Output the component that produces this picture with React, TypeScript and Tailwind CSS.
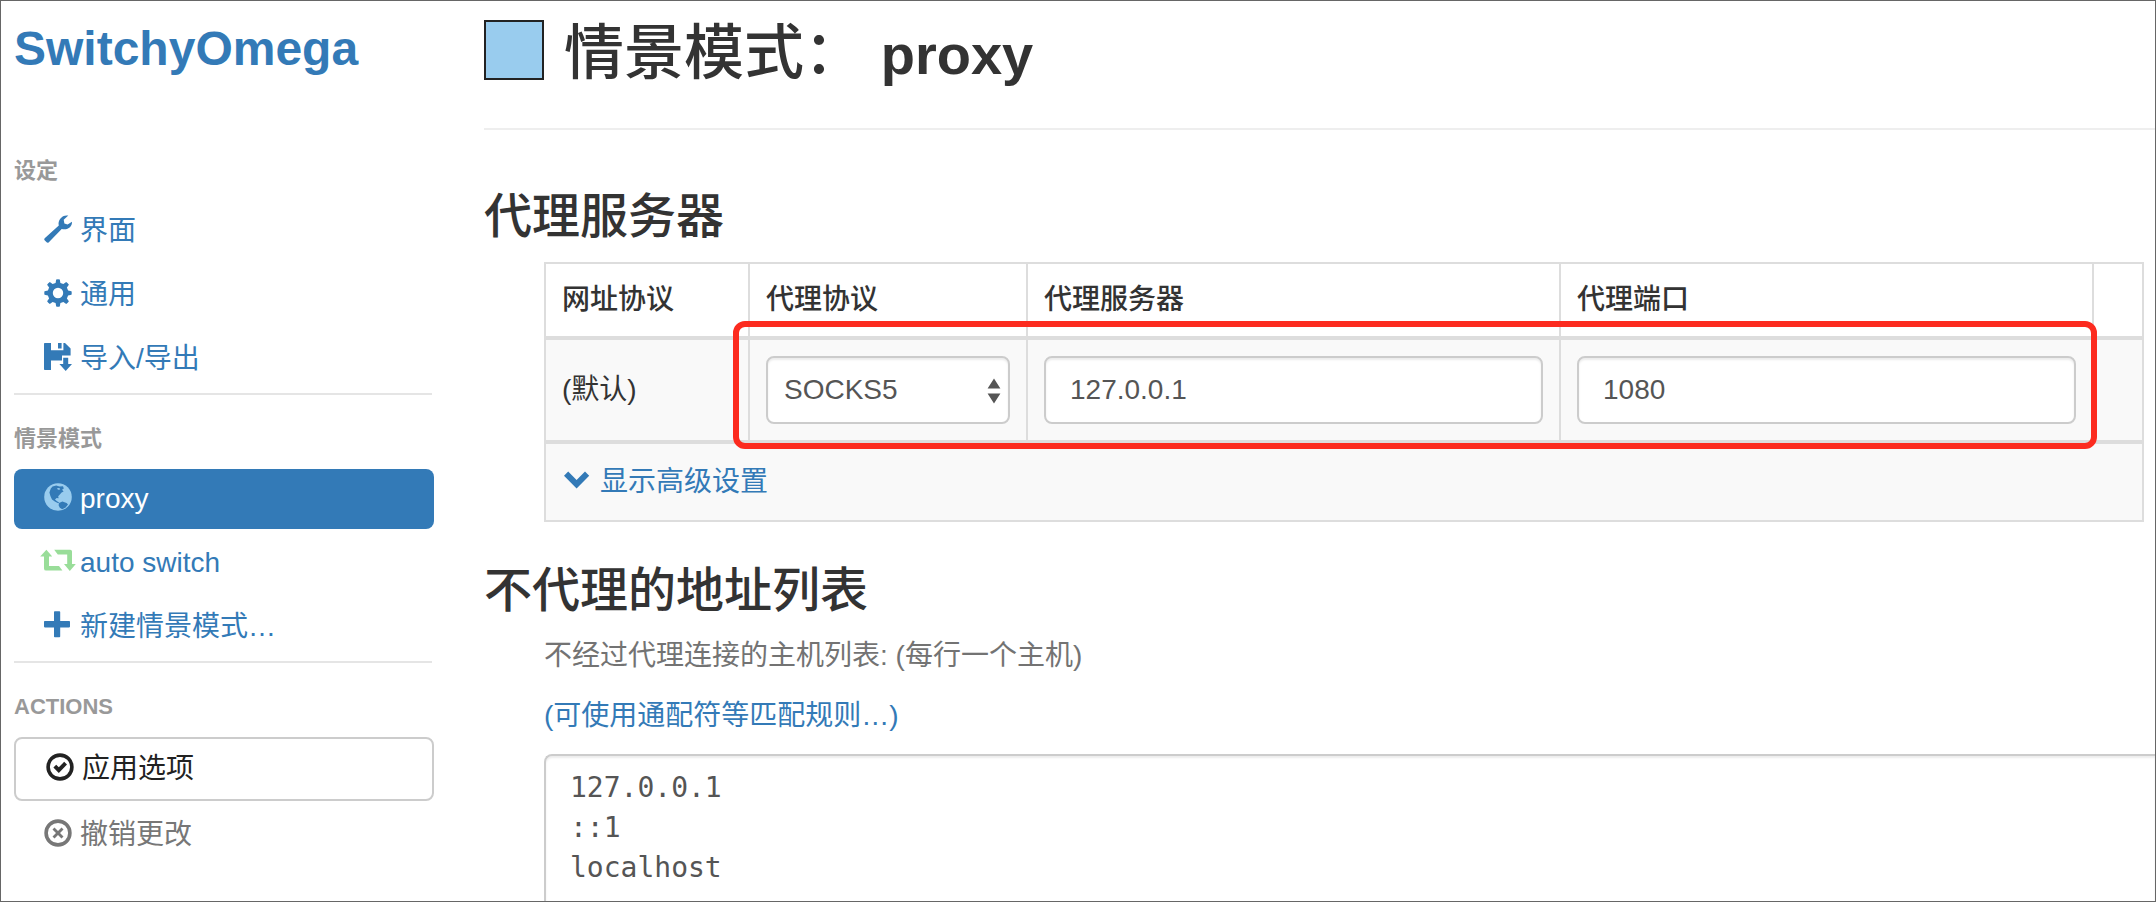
import { useState } from "react";
import type { ReactNode } from "react";
import clsx from "clsx";

function Icon({ children, className }: { children: ReactNode; className?: string }) {
  return (
    <svg viewBox="0 0 28 28" fill="currentColor" aria-hidden="true" className={clsx("mb-1 size-7 shrink-0 overflow-visible", className)}>
      {children}
    </svg>
  );
}

const WrenchIcon = () => (
  <Icon>
    <path d="M.7 23.2 14.8 10.6C13.4 5 18.3-.6 24.3.6L19.7 4.7 20.4 8.4 23.6 9.6 28 6.8C28.4 12 23.2 15.6 17.7 13.9L4.6 27.4Q3.6 28.2 2.6 27.3L.6 25.3Q-.3 24.2.7 23.2Z" />
  </Icon>
);

const CogIcon = () => (
  <Icon>
    <path
      fillRule="evenodd"
      d="M11.6 3.9 12.2.5Q14 0 15.8.5L16.4 3.9 19.4 5.1 22.2 3.1Q23.9 4.1 24.9 5.8L22.9 8.6 24.1 11.6 27.5 12.2Q28 14 27.5 15.8L24.1 16.4 22.9 19.4 24.9 22.2Q23.9 23.9 22.2 24.9L19.4 22.9 16.4 24.1 15.8 27.5Q14 28 12.2 27.5L11.6 24.1 8.6 22.9 5.8 24.9Q4.1 23.9 3.1 22.2L5.1 19.4 3.9 16.4.5 15.8Q0 14 .5 12.2L3.9 11.6 5.1 8.6 3.1 5.8Q4.1 4.1 5.8 3.1L8.6 5.1ZM14 8.8A5.2 5.2 0 1 0 14 19.2 5.2 5.2 0 1 0 14 8.8Z"
    />
  </Icon>
);

const FloppySaveIcon = () => (
  <Icon>
    <path d="M0 .8Q0 0 .8 0H7V7.2H19.4V0H21L26.6 5.6V12.6H18V17.5H7V27H.8Q0 27 0 26.2Z" />
    <path d="M14 0H17.6V5.4H14ZM19.2 14.8H24.2V21H28L21.7 28 15.4 21H19.2Z" />
  </Icon>
);

const GlobeIcon = () => (
  <Icon className="text-[#99ccee]">
    <circle cx="14" cy="14" r="13.8" />
    <path
      fill="#337ab7"
      d="M8.5 3.6 12.2 2.6 15.6 3.4 19 3.2 19.8 5.4 18 6.8 19.6 8.6 17.6 9.6 15.6 11.8 14.2 13.2 14.6 15.2 12.6 15 11 16.4 13 18.2 15.2 19.4 14.2 20.2 10.8 18.6 8 16.4 6.4 13 5.4 9.4 6.8 5.6ZM15 20 18.4 18.6 22.6 20 24 21.4 21.6 24.6 18.2 26.2 15.8 24.8 14.6 22.2Z"
    />
    <path d="M13 5.2 15.4 5 16.2 6.4 14 6.8Z" />
  </Icon>
);

const RetweetIcon = () => (
  <Icon className="text-[#99dd99]">
    <path d="M2.4 2.8 8.2 9.6H5V19H15L18.4 23.6H2.2Q0 23.6 0 21.4V9.6H-3.8ZM10.2 2.8H26.2Q28 2.8 28 4.6V17H31.8L25.8 24 20 17H23.2V7.4H13.8Z" />
  </Icon>
);

const PlusIcon = () => (
  <Icon>
    <path d="M10 1Q10 .2 10.8.2H15.4Q16.2.2 16.2 1V10H25.2Q26 10 26 10.8V15.6Q26 16.4 25.2 16.4H16.2V25.4Q16.2 26.2 15.4 26.2H10.8Q10 26.2 10 25.4V16.4H.8Q0 16.4 0 15.6V10.8Q0 10 .8 10H10Z" />
  </Icon>
);

const OkCircleIcon = () => (
  <Icon>
    <circle cx="14" cy="14" r="11.9" fill="none" stroke="currentColor" strokeWidth="3.6" />
    <path d="M7.4 14.6 10.2 11.8 12.8 14.2 18.2 8.8 21 11.6 12.8 20Z" />
  </Icon>
);

const RemoveCircleIcon = () => (
  <Icon>
    <circle cx="14" cy="14" r="11.9" fill="none" stroke="currentColor" strokeWidth="3.6" />
    <path d="M10.5 8.5 14 12 17.5 8.5 19.5 10.5 16 14 19.5 17.5 17.5 19.5 14 16 10.5 19.5 8.5 17.5 12 14 8.5 10.5Z" />
  </Icon>
);

const ChevronDownIcon = () => (
  <Icon>
    <path d="M2 9.8 6.2 5.6 14.6 14 23 5.6 27.2 9.8 14.6 22.4Z" />
  </Icon>
);

function NavHeader({ children }: { children: ReactNode }) {
  return <h2 className="pt-7 pb-[14px] text-[22px] leading-8 font-bold text-[#999999]">{children}</h2>;
}

function NavItem({ icon, active, muted, children }: { icon: ReactNode; active?: boolean; muted?: boolean; children: ReactNode }) {
  return (
    <li>
      <a
        href="#"
        className={clsx(
          "flex h-[60px] items-center gap-2 rounded-lg px-[30px]",
          active ? "bg-[#337ab7] text-white" : muted ? "text-[#777777]" : "text-[#337ab7]"
        )}
      >
        {icon}
        {children}
      </a>
    </li>
  );
}

function Divider() {
  return <hr className="mt-1 mr-[2px] border-t-2 border-[#e5e5e5]" />;
}

const control =
  "h-[68px] w-full rounded-lg border-2 border-[#cccccc] bg-white text-[#555555] shadow-[inset_0_2px_2px_rgba(0,0,0,0.075)] outline-none";

const sectionTitle = "text-[48px] leading-[54px] font-medium text-[#333333]";

const headCell = "border-x-2 border-[#dddddd] px-4 font-medium";

export default function App() {
  const [scheme, setScheme] = useState("SOCKS5");
  const [server, setServer] = useState("127.0.0.1");
  const [port, setPort] = useState("1080");
  const [bypass, setBypass] = useState("127.0.0.1\n::1\nlocalhost");

  return (
    <div className="flex h-screen overflow-hidden border border-[#666666] bg-white font-['Liberation_Sans','Noto_Sans_CJK_SC',sans-serif] text-[28px] leading-10 text-[#333333]">
      <aside className="w-[433px] shrink-0 pl-[13px]">
        <h1 className="pt-5 text-[48px] leading-[56px] font-bold">
          <a href="#" className="text-[#337ab7]">
            SwitchyOmega
          </a>
        </h1>
        <nav className="pt-[50px]">
          <NavHeader>设定</NavHeader>
          <ul className="flex flex-col gap-1">
            <NavItem icon={<WrenchIcon />}>界面</NavItem>
            <NavItem icon={<CogIcon />}>通用</NavItem>
            <NavItem icon={<FloppySaveIcon />}>导入/导出</NavItem>
          </ul>
          <Divider />
          <NavHeader>情景模式</NavHeader>
          <ul className="flex flex-col gap-1">
            <NavItem icon={<GlobeIcon />} active>
              proxy
            </NavItem>
            <NavItem icon={<RetweetIcon />}>auto switch</NavItem>
            <NavItem icon={<PlusIcon />}>新建情景模式…</NavItem>
          </ul>
          <Divider />
          <NavHeader>ACTIONS</NavHeader>
          <button
            type="button"
            className="mb-1 flex h-16 w-full items-center gap-2 rounded-lg border-2 border-[#cccccc] bg-white px-[30px] text-[#222222]"
          >
            <OkCircleIcon />
            应用选项
          </button>
          <ul>
            <NavItem icon={<RemoveCircleIcon />} muted>
              撤销更改
            </NavItem>
          </ul>
        </nav>
      </aside>

      <main className="flex min-w-0 flex-1 flex-col pl-[50px]">
        <header className="flex h-[129px] shrink-0 gap-5 border-b-2 border-[#eeeeee] pt-[19px]">
          <input type="button" aria-label="颜色" className="size-[60px] border-2 border-[#222222] bg-[#99ccee]" />
          <h2 className="text-[60px] leading-[68px] font-medium">
            情景模式： <span className="text-[56px] font-bold">proxy</span>
          </h2>
        </header>

        <section className="pt-[60px]">
          <h3 className={sectionTitle}>代理服务器</h3>
          <div className="relative mt-[18px] mr-[11px] ml-[60px]">
            <table className="w-full table-fixed border-collapse border-2 border-[#dddddd] text-left">
              <colgroup>
                <col className="w-[204px]" />
                <col className="w-[278px]" />
                <col />
                <col />
                <col className="w-[50px]" />
              </colgroup>
              <thead>
                <tr className="h-[75px] border-b-4 border-[#dddddd]">
                  <th className={headCell}>网址协议</th>
                  <th className={headCell}>代理协议</th>
                  <th className={headCell}>代理服务器</th>
                  <th className={headCell}>代理端口</th>
                  <td className="border-x-2 border-[#dddddd]" />
                </tr>
              </thead>
              <tbody className="bg-[#f9f9f9]">
                <tr className="h-[104px] border-b-4 border-[#dddddd]">
                  <td className="px-4">(默认)</td>
                  <td className="border-x-2 border-[#dddddd] px-4">
                    <div className="relative">
                      <select
                        aria-label="代理协议"
                        value={scheme}
                        onChange={(e) => setScheme(e.target.value)}
                        className={clsx(control, "block appearance-none px-4")}
                      >
                        <option>HTTP</option>
                        <option>HTTPS</option>
                        <option>SOCKS4</option>
                        <option>SOCKS5</option>
                      </select>
                      <svg
                        viewBox="0 0 14 26"
                        fill="#555555"
                        aria-hidden="true"
                        className="pointer-events-none absolute top-[22px] right-[9px] h-[26px] w-[14px]"
                      >
                        <path d="M7 .5 13.4 10.5H.6ZM7 25.5.6 15.5H13.4Z" />
                      </svg>
                    </div>
                  </td>
                  <td className="border-x-2 border-[#dddddd] px-4">
                    <input
                      type="text"
                      aria-label="代理服务器"
                      value={server}
                      onChange={(e) => setServer(e.target.value)}
                      className={clsx(control, "block px-6")}
                    />
                  </td>
                  <td className="border-x-2 border-[#dddddd] px-4">
                    <input
                      type="text"
                      aria-label="代理端口"
                      value={port}
                      onChange={(e) => setPort(e.target.value)}
                      className={clsx(control, "block px-6")}
                    />
                  </td>
                  <td />
                </tr>
                <tr className="h-[79px]">
                  <td colSpan={5} className="px-4">
                    <button type="button" className="flex items-center gap-[10px] text-[#337ab7]">
                      <ChevronDownIcon />
                      显示高级设置
                    </button>
                  </td>
                </tr>
              </tbody>
            </table>
            {/* highlight drawn over the editable cells */}
            <div className="pointer-events-none absolute top-[59px] right-[47px] left-[189px] h-32 rounded-xl border-6 border-[#fc2b1f]" />
          </div>
        </section>

        <section className="flex min-h-0 flex-1 flex-col pt-[42px]">
          <h3 className={sectionTitle}>不代理的地址列表</h3>
          <div className="flex min-h-0 flex-1 flex-col pl-[60px]">
            <p className="pt-[18px] text-[#737373]">不经过代理连接的主机列表: (每行一个主机)</p>
            <p className="pt-5 pb-[18px]">
              <a href="#" className="text-[#337ab7]">
                (可使用通配符等匹配规则…)
              </a>
            </p>
            <textarea
              aria-label="不代理的地址列表"
              value={bypass}
              onChange={(e) => setBypass(e.target.value)}
              className="w-full flex-1 resize-none rounded-tl-lg border-t-2 border-l-2 border-[#cccccc] px-6 py-3 font-['DejaVu_Sans_Mono','Liberation_Mono',monospace] leading-10 text-[#555555] shadow-[inset_0_2px_2px_rgba(0,0,0,0.075)] outline-none"
            />
          </div>
        </section>
      </main>
    </div>
  );
}
